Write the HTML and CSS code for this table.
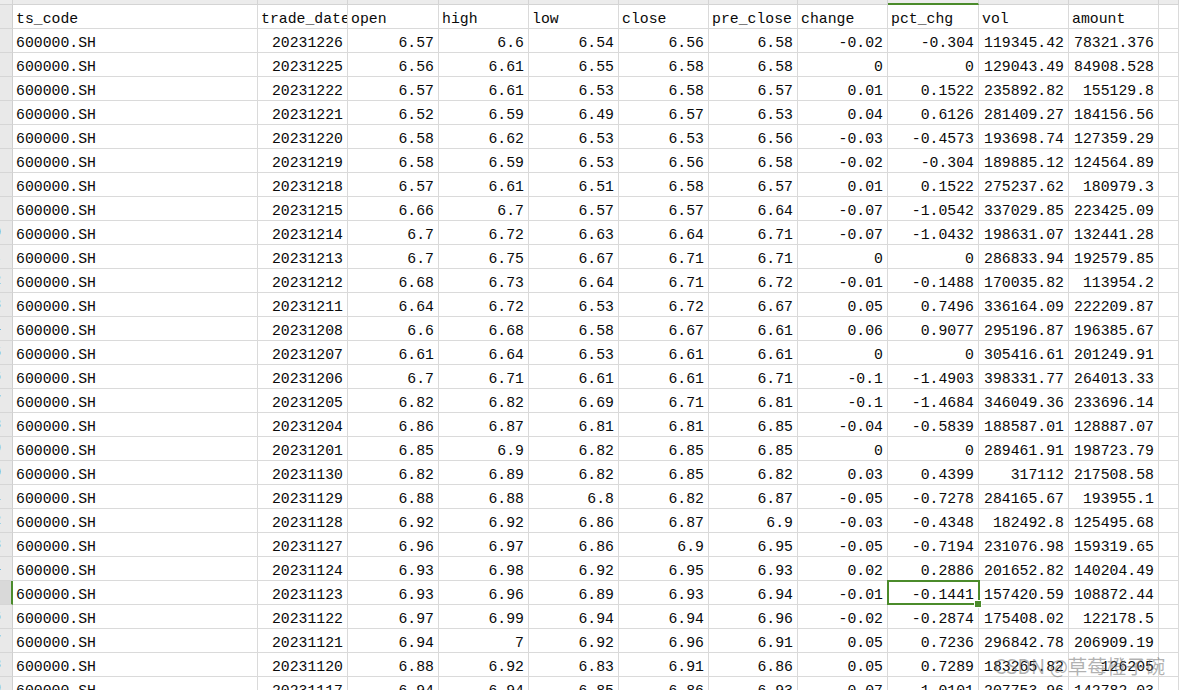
FILE: index.html
```html
<!DOCTYPE html>
<html lang="zh-CN">
<head>
<meta charset="utf-8">
<title>600000.SH</title>
<link rel="stylesheet" href="styles.css">
</head>
<body>
<div class="sheet">
  <div class="row strip">
    <div class="rh"></div><div class="c"></div><div class="c"></div><div class="c"></div><div class="c"></div><div class="c"></div><div class="c"></div><div class="c"></div><div class="c"></div><div class="c active-col"></div><div class="c"></div><div class="c"></div><div class="c"></div>
  </div>
  <div class="row"><div class="rh"><span>1</span></div><div class="c">ts_code</div><div class="c">trade_date</div><div class="c">open</div><div class="c">high</div><div class="c">low</div><div class="c">close</div><div class="c">pre_close</div><div class="c">change</div><div class="c">pct_chg</div><div class="c">vol</div><div class="c">amount</div><div class="c"></div></div>
  <div class="row"><div class="rh"><span>2</span></div><div class="c">600000.SH</div><div class="c n">20231226</div><div class="c n">6.57</div><div class="c n">6.6</div><div class="c n">6.54</div><div class="c n">6.56</div><div class="c n">6.58</div><div class="c n">-0.02</div><div class="c n">-0.304</div><div class="c n">119345.42</div><div class="c n">78321.376</div><div class="c"></div></div>
  <div class="row"><div class="rh"><span>3</span></div><div class="c">600000.SH</div><div class="c n">20231225</div><div class="c n">6.56</div><div class="c n">6.61</div><div class="c n">6.55</div><div class="c n">6.58</div><div class="c n">6.58</div><div class="c n">0</div><div class="c n">0</div><div class="c n">129043.49</div><div class="c n">84908.528</div><div class="c"></div></div>
  <div class="row"><div class="rh"><span>4</span></div><div class="c">600000.SH</div><div class="c n">20231222</div><div class="c n">6.57</div><div class="c n">6.61</div><div class="c n">6.53</div><div class="c n">6.58</div><div class="c n">6.57</div><div class="c n">0.01</div><div class="c n">0.1522</div><div class="c n">235892.82</div><div class="c n">155129.8</div><div class="c"></div></div>
  <div class="row"><div class="rh"><span>5</span></div><div class="c">600000.SH</div><div class="c n">20231221</div><div class="c n">6.52</div><div class="c n">6.59</div><div class="c n">6.49</div><div class="c n">6.57</div><div class="c n">6.53</div><div class="c n">0.04</div><div class="c n">0.6126</div><div class="c n">281409.27</div><div class="c n">184156.56</div><div class="c"></div></div>
  <div class="row"><div class="rh"><span>6</span></div><div class="c">600000.SH</div><div class="c n">20231220</div><div class="c n">6.58</div><div class="c n">6.62</div><div class="c n">6.53</div><div class="c n">6.53</div><div class="c n">6.56</div><div class="c n">-0.03</div><div class="c n">-0.4573</div><div class="c n">193698.74</div><div class="c n">127359.29</div><div class="c"></div></div>
  <div class="row"><div class="rh"><span>7</span></div><div class="c">600000.SH</div><div class="c n">20231219</div><div class="c n">6.58</div><div class="c n">6.59</div><div class="c n">6.53</div><div class="c n">6.56</div><div class="c n">6.58</div><div class="c n">-0.02</div><div class="c n">-0.304</div><div class="c n">189885.12</div><div class="c n">124564.89</div><div class="c"></div></div>
  <div class="row"><div class="rh"><span>8</span></div><div class="c">600000.SH</div><div class="c n">20231218</div><div class="c n">6.57</div><div class="c n">6.61</div><div class="c n">6.51</div><div class="c n">6.58</div><div class="c n">6.57</div><div class="c n">0.01</div><div class="c n">0.1522</div><div class="c n">275237.62</div><div class="c n">180979.3</div><div class="c"></div></div>
  <div class="row"><div class="rh"><span>9</span></div><div class="c">600000.SH</div><div class="c n">20231215</div><div class="c n">6.66</div><div class="c n">6.7</div><div class="c n">6.57</div><div class="c n">6.57</div><div class="c n">6.64</div><div class="c n">-0.07</div><div class="c n">-1.0542</div><div class="c n">337029.85</div><div class="c n">223425.09</div><div class="c"></div></div>
  <div class="row"><div class="rh"><span>10</span></div><div class="c">600000.SH</div><div class="c n">20231214</div><div class="c n">6.7</div><div class="c n">6.72</div><div class="c n">6.63</div><div class="c n">6.64</div><div class="c n">6.71</div><div class="c n">-0.07</div><div class="c n">-1.0432</div><div class="c n">198631.07</div><div class="c n">132441.28</div><div class="c"></div></div>
  <div class="row"><div class="rh"><span>11</span></div><div class="c">600000.SH</div><div class="c n">20231213</div><div class="c n">6.7</div><div class="c n">6.75</div><div class="c n">6.67</div><div class="c n">6.71</div><div class="c n">6.71</div><div class="c n">0</div><div class="c n">0</div><div class="c n">286833.94</div><div class="c n">192579.85</div><div class="c"></div></div>
  <div class="row"><div class="rh"><span>12</span></div><div class="c">600000.SH</div><div class="c n">20231212</div><div class="c n">6.68</div><div class="c n">6.73</div><div class="c n">6.64</div><div class="c n">6.71</div><div class="c n">6.72</div><div class="c n">-0.01</div><div class="c n">-0.1488</div><div class="c n">170035.82</div><div class="c n">113954.2</div><div class="c"></div></div>
  <div class="row"><div class="rh"><span>13</span></div><div class="c">600000.SH</div><div class="c n">20231211</div><div class="c n">6.64</div><div class="c n">6.72</div><div class="c n">6.53</div><div class="c n">6.72</div><div class="c n">6.67</div><div class="c n">0.05</div><div class="c n">0.7496</div><div class="c n">336164.09</div><div class="c n">222209.87</div><div class="c"></div></div>
  <div class="row"><div class="rh"><span>14</span></div><div class="c">600000.SH</div><div class="c n">20231208</div><div class="c n">6.6</div><div class="c n">6.68</div><div class="c n">6.58</div><div class="c n">6.67</div><div class="c n">6.61</div><div class="c n">0.06</div><div class="c n">0.9077</div><div class="c n">295196.87</div><div class="c n">196385.67</div><div class="c"></div></div>
  <div class="row"><div class="rh"><span>15</span></div><div class="c">600000.SH</div><div class="c n">20231207</div><div class="c n">6.61</div><div class="c n">6.64</div><div class="c n">6.53</div><div class="c n">6.61</div><div class="c n">6.61</div><div class="c n">0</div><div class="c n">0</div><div class="c n">305416.61</div><div class="c n">201249.91</div><div class="c"></div></div>
  <div class="row"><div class="rh"><span>16</span></div><div class="c">600000.SH</div><div class="c n">20231206</div><div class="c n">6.7</div><div class="c n">6.71</div><div class="c n">6.61</div><div class="c n">6.61</div><div class="c n">6.71</div><div class="c n">-0.1</div><div class="c n">-1.4903</div><div class="c n">398331.77</div><div class="c n">264013.33</div><div class="c"></div></div>
  <div class="row"><div class="rh"><span>17</span></div><div class="c">600000.SH</div><div class="c n">20231205</div><div class="c n">6.82</div><div class="c n">6.82</div><div class="c n">6.69</div><div class="c n">6.71</div><div class="c n">6.81</div><div class="c n">-0.1</div><div class="c n">-1.4684</div><div class="c n">346049.36</div><div class="c n">233696.14</div><div class="c"></div></div>
  <div class="row"><div class="rh"><span>18</span></div><div class="c">600000.SH</div><div class="c n">20231204</div><div class="c n">6.86</div><div class="c n">6.87</div><div class="c n">6.81</div><div class="c n">6.81</div><div class="c n">6.85</div><div class="c n">-0.04</div><div class="c n">-0.5839</div><div class="c n">188587.01</div><div class="c n">128887.07</div><div class="c"></div></div>
  <div class="row"><div class="rh"><span>19</span></div><div class="c">600000.SH</div><div class="c n">20231201</div><div class="c n">6.85</div><div class="c n">6.9</div><div class="c n">6.82</div><div class="c n">6.85</div><div class="c n">6.85</div><div class="c n">0</div><div class="c n">0</div><div class="c n">289461.91</div><div class="c n">198723.79</div><div class="c"></div></div>
  <div class="row"><div class="rh"><span>20</span></div><div class="c">600000.SH</div><div class="c n">20231130</div><div class="c n">6.82</div><div class="c n">6.89</div><div class="c n">6.82</div><div class="c n">6.85</div><div class="c n">6.82</div><div class="c n">0.03</div><div class="c n">0.4399</div><div class="c n">317112</div><div class="c n">217508.58</div><div class="c"></div></div>
  <div class="row"><div class="rh"><span>21</span></div><div class="c">600000.SH</div><div class="c n">20231129</div><div class="c n">6.88</div><div class="c n">6.88</div><div class="c n">6.8</div><div class="c n">6.82</div><div class="c n">6.87</div><div class="c n">-0.05</div><div class="c n">-0.7278</div><div class="c n">284165.67</div><div class="c n">193955.1</div><div class="c"></div></div>
  <div class="row"><div class="rh"><span>22</span></div><div class="c">600000.SH</div><div class="c n">20231128</div><div class="c n">6.92</div><div class="c n">6.92</div><div class="c n">6.86</div><div class="c n">6.87</div><div class="c n">6.9</div><div class="c n">-0.03</div><div class="c n">-0.4348</div><div class="c n">182492.8</div><div class="c n">125495.68</div><div class="c"></div></div>
  <div class="row"><div class="rh"><span>23</span></div><div class="c">600000.SH</div><div class="c n">20231127</div><div class="c n">6.96</div><div class="c n">6.97</div><div class="c n">6.86</div><div class="c n">6.9</div><div class="c n">6.95</div><div class="c n">-0.05</div><div class="c n">-0.7194</div><div class="c n">231076.98</div><div class="c n">159319.65</div><div class="c"></div></div>
  <div class="row"><div class="rh"><span>24</span></div><div class="c">600000.SH</div><div class="c n">20231124</div><div class="c n">6.93</div><div class="c n">6.98</div><div class="c n">6.92</div><div class="c n">6.95</div><div class="c n">6.93</div><div class="c n">0.02</div><div class="c n">0.2886</div><div class="c n">201652.82</div><div class="c n">140204.49</div><div class="c"></div></div>
  <div class="row"><div class="rh rh-active"><span>25</span></div><div class="c">600000.SH</div><div class="c n">20231123</div><div class="c n">6.93</div><div class="c n">6.96</div><div class="c n">6.89</div><div class="c n">6.93</div><div class="c n">6.94</div><div class="c n">-0.01</div><div class="c n sel">-0.1441</div><div class="c n">157420.59</div><div class="c n">108872.44</div><div class="c"></div></div>
  <div class="row"><div class="rh"><span>26</span></div><div class="c">600000.SH</div><div class="c n">20231122</div><div class="c n">6.97</div><div class="c n">6.99</div><div class="c n">6.94</div><div class="c n">6.94</div><div class="c n">6.96</div><div class="c n">-0.02</div><div class="c n">-0.2874</div><div class="c n">175408.02</div><div class="c n">122178.5</div><div class="c"></div></div>
  <div class="row"><div class="rh"><span>27</span></div><div class="c">600000.SH</div><div class="c n">20231121</div><div class="c n">6.94</div><div class="c n">7</div><div class="c n">6.92</div><div class="c n">6.96</div><div class="c n">6.91</div><div class="c n">0.05</div><div class="c n">0.7236</div><div class="c n">296842.78</div><div class="c n">206909.19</div><div class="c"></div></div>
  <div class="row"><div class="rh"><span>28</span></div><div class="c">600000.SH</div><div class="c n">20231120</div><div class="c n">6.88</div><div class="c n">6.92</div><div class="c n">6.83</div><div class="c n">6.91</div><div class="c n">6.86</div><div class="c n">0.05</div><div class="c n">0.7289</div><div class="c n">183265.82</div><div class="c n">126205</div><div class="c"></div></div>
  <div class="row"><div class="rh"><span>29</span></div><div class="c">600000.SH</div><div class="c n">20231117</div><div class="c n">6.94</div><div class="c n">6.94</div><div class="c n">6.85</div><div class="c n">6.86</div><div class="c n">6.93</div><div class="c n">-0.07</div><div class="c n">-1.0101</div><div class="c n">207753.96</div><div class="c n">142782.03</div><div class="c"></div></div>
</div>
<div class="watermark">CSDN @草莓橙子碗</div>
</body>
</html>
```
FILE: styles.css
```css
* { box-sizing: border-box; }
html, body {
  margin: 0;
  padding: 0;
  background: #fff;
  width: 1179px;
  height: 690px;
  overflow: hidden;
}
body {
  position: relative;
  font-family: "Liberation Mono", "Noto Sans CJK SC", monospace;
  font-size: 14.8px;
  color: #0a0a0a;
}
.sheet {
  display: flex;
  flex-direction: column;
}
.row {
  display: grid;
  grid-template-columns: 13px 245px 90px 91px 90px 90px 90px 89px 90px 91px 90px 90px 20px;
  height: 24px;
  flex: none;
}
.c {
  border-right: 1px solid #dadada;
  border-bottom: 1px solid #dadada;
  padding: 5px 3px 0 3px;
  line-height: 18px;
  white-space: nowrap;
  overflow: hidden;
}
.n {
  text-align: right;
  padding-right: 4px;
}
.rh {
  background: #e9e9e9;
  border-right: 1px solid #cfcfcf;
  border-bottom: 1px solid #d6d6d6;
  overflow: hidden;
  display: flex;
  justify-content: flex-end;
  font-family: "Liberation Sans", sans-serif;
  font-size: 12px;
  line-height: 23px;
  color: #3d74a8;
}
.rh span {
  flex: none;
  width: 36px;
  text-align: center;
}
.rh-active {
  background: #d9d9d9;
  border-right: 2px solid #4b8b2b;
  color: #2f8f8a;
}
.strip {
  height: 5px;
}
.strip .c, .strip .rh {
  background: #ececec;
  border-right: 1px solid #d4d4d4;
  border-bottom: 1px solid #d4d4d4;
  padding: 0;
}
.strip .active-col {
  border-bottom: 2px solid #4b8b2b;
}
.sel {
  position: relative;
  overflow: visible;
}
.sel::before {
  content: "";
  position: absolute;
  top: -1px;
  left: -1px;
  right: -2px;
  bottom: -1px;
  border: 2px solid #4b8b2b;
}
.sel::after {
  content: "";
  position: absolute;
  right: -4px;
  bottom: -4px;
  width: 6px;
  height: 6px;
  background: #4b8b2b;
  border: 1px solid #fff;
}
.watermark {
  position: absolute;
  left: 994px;
  top: 652px;
  font-family: "Noto Sans CJK SC", "Liberation Sans", sans-serif;
  font-size: 19.5px;
  line-height: 28px;
  color: rgba(110, 110, 110, 0.55);
  white-space: nowrap;
}
```
